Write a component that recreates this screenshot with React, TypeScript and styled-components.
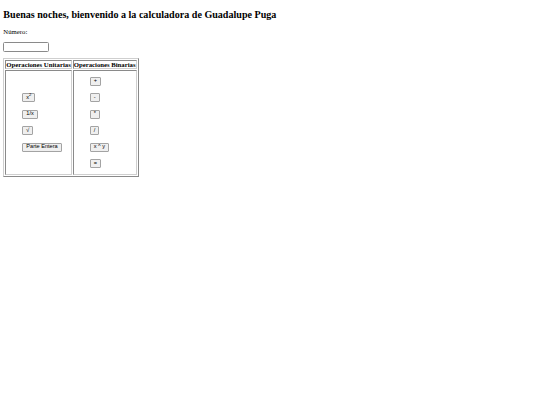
import React from "react";
import styled, { createGlobalStyle } from "styled-components";

// The whole page is drawn at a reduced scale; most lengths are derived from S.
const S = 0.42;
const px = (n: number) => `${(n * S).toFixed(2)}px`;

const LIGHT = "#cfcfcf";
const DARK = "#8a8a8a";

const Global = createGlobalStyle`
  html, body {
    background: #ffffff;
  }
  body {
    margin: ${px(8)};
    font-family: "Liberation Serif", "Times New Roman", serif;
    font-size: ${px(16)};
    color: #000000;
  }
`;

const Title = styled.h2`
  font-size: ${px(24)};
  font-weight: bold;
  margin: 5.2px 0 ${px(20)};
`;

const Label = styled.p`
  margin: ${px(16)} 0;
`;

const NumberInput = styled.input`
  display: block;
  box-sizing: border-box;
  width: 46px;
  height: 10px;
  margin: 0;
  padding: 0 ${px(2)};
  border: 1px solid #8a8a8a;
  border-radius: 1.5px;
  background: #ffffff;
  font-family: "Liberation Sans", Arial, sans-serif;
  font-size: ${px(13.33)};
`;

const Table = styled.table`
  margin-top: 6px;
  border: 1px solid;
  border-color: ${LIGHT} ${DARK} ${DARK} ${LIGHT};
  border-spacing: 1px;
`;

const HeadCell = styled.th`
  border: 1px solid;
  border-color: ${DARK} ${LIGHT} ${LIGHT} ${DARK};
  padding: 0;
  font-weight: bold;
  white-space: nowrap;
`;

const BodyCell = styled.td`
  border: 1px solid;
  border-color: ${DARK} ${LIGHT} ${LIGHT} ${DARK};
  padding: 0;
  vertical-align: middle;
`;

const ButtonList = styled.div`
  display: flex;
  flex-direction: column;
  align-items: flex-start;
  gap: ${px(18.4)};
  margin: ${px(14.5)} 0;
  padding-left: 16px;
`;

const Key = styled.button`
  box-sizing: border-box;
  height: ${px(21)};
  margin: 0;
  padding: 0 ${px(7)};
  border: 1px solid #a3a3a3;
  border-radius: 1px;
  background: #efefef;
  color: #000000;
  font-family: "Liberation Sans", Arial, sans-serif;
  font-size: ${px(13.33)};
  line-height: 1;
  cursor: pointer;
`;

const Sup = styled.sup`
  font-size: 0.75em;
  line-height: 0;
`;

const unary: React.ReactNode[] = [
  <>
    x<Sup>2</Sup>
  </>,
  "1/x",
  "√",
  "Parte Entera",
];

const binary = ["+", "-", "*", "/", "x ^ y", "="];

export default function App() {
  return (
    <>
      <Global />
      <Title>Buenas noches, bienvenido a la calculadora de Guadalupe Puga</Title>
      <Label>Número:</Label>
      <NumberInput type="text" />
      <Table>
        <thead>
          <tr>
            <HeadCell>Operaciones Unitarias</HeadCell>
            <HeadCell>Operaciones Binarias</HeadCell>
          </tr>
        </thead>
        <tbody>
          <tr>
            <BodyCell>
              <ButtonList>
                {unary.map((label, i) => (
                  <Key key={i}>{label}</Key>
                ))}
              </ButtonList>
            </BodyCell>
            <BodyCell>
              <ButtonList>
                {binary.map((label) => (
                  <Key key={label}>{label}</Key>
                ))}
              </ButtonList>
            </BodyCell>
          </tr>
        </tbody>
      </Table>
    </>
  );
}
